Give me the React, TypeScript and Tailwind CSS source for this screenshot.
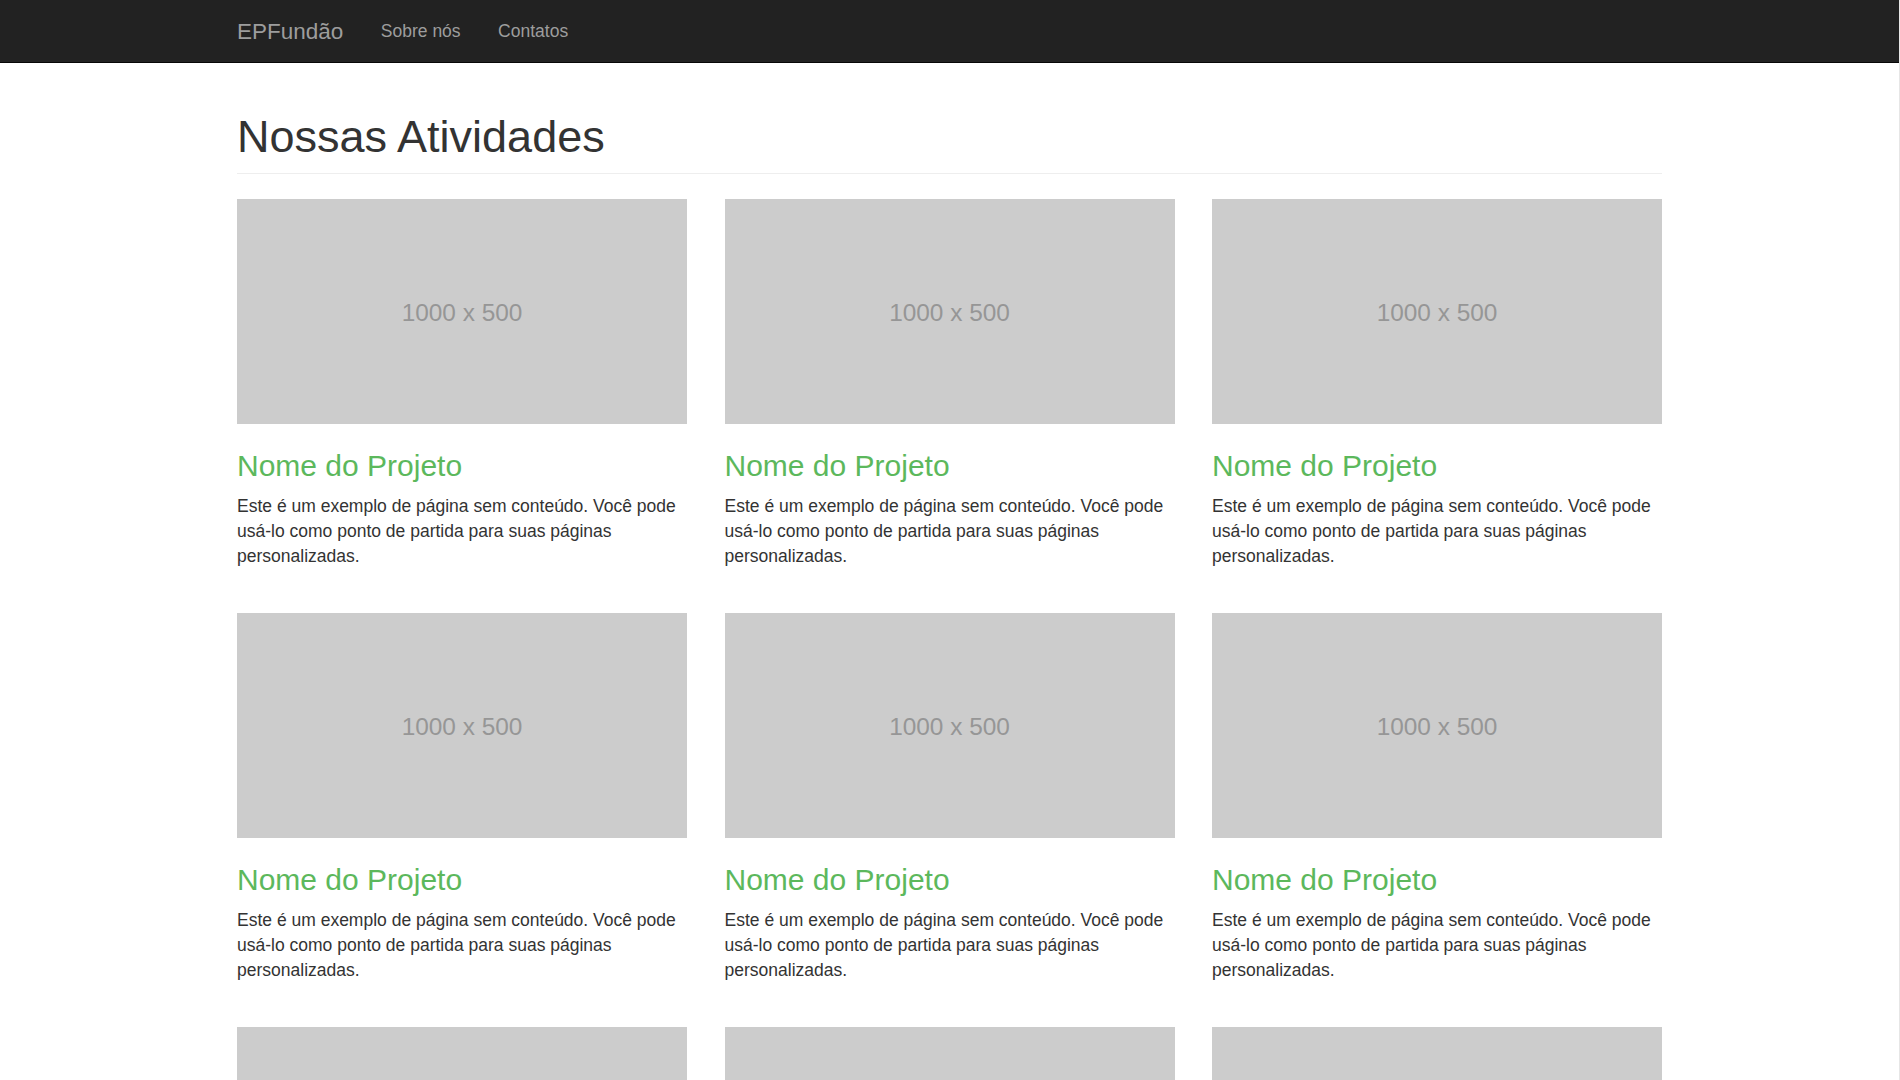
import React from "react";

const cards = Array.from({ length: 9 }, (_, i) => i);

function Placeholder() {
  return (
    <div className="flex h-[225px] w-full items-center justify-center bg-[#cccccc]">
      <span className="pt-[5px] text-[24.4px] leading-none text-[#969696]">1000 x 500</span>
    </div>
  );
}

function Card() {
  return (
    <div className="flex flex-col">
      <Placeholder />
      <h3 className="mt-[25px] mb-[12.5px] text-[30px] leading-[33px] font-normal text-[#5cb85c]">
        Nome do Projeto
      </h3>
      <p className="text-[17.5px] leading-[25px] text-[#333333]">
        Este é um exemplo de página sem conteúdo. Você pode usá-lo como ponto de partida para suas páginas
        personalizadas.
      </p>
    </div>
  );
}

export default function App() {
  return (
    <div
      className="min-h-screen w-full border-r border-[#e6e6e6] bg-white"
      style={{ fontFamily: '"Liberation Sans", Arial, Helvetica, sans-serif' }}
    >
      <nav className="h-[63px] w-full border-b border-[#080808] bg-[#222222]">
        <div className="mx-auto flex h-[62px] w-[1425px] items-start">
          <a className="pt-[18.75px] pr-[18.75px] text-[22.5px] leading-[25px] text-[#9d9d9d]" href="#">
            EPFundão
          </a>
          <a className="px-[18.75px] pt-[18.75px] text-[17.5px] leading-[25px] text-[#9d9d9d]" href="#">
            Sobre nós
          </a>
          <a className="px-[18.75px] pt-[18.75px] text-[17.5px] leading-[25px] text-[#9d9d9d]" href="#">
            Contatos
          </a>
        </div>
      </nav>
      <main className="mx-auto w-[1425px]">
        <h1 className="mt-[49px] mb-[25px] border-b border-[#eeeeee] pb-[11px] text-[45px] leading-[49.5px] font-normal text-[#333333]">
          Nossas Atividades
        </h1>
        <div className="grid grid-cols-3 gap-x-[37.5px] gap-y-[43.5px]">
          {cards.map((i) => (
            <Card key={i} />
          ))}
        </div>
      </main>
    </div>
  );
}
